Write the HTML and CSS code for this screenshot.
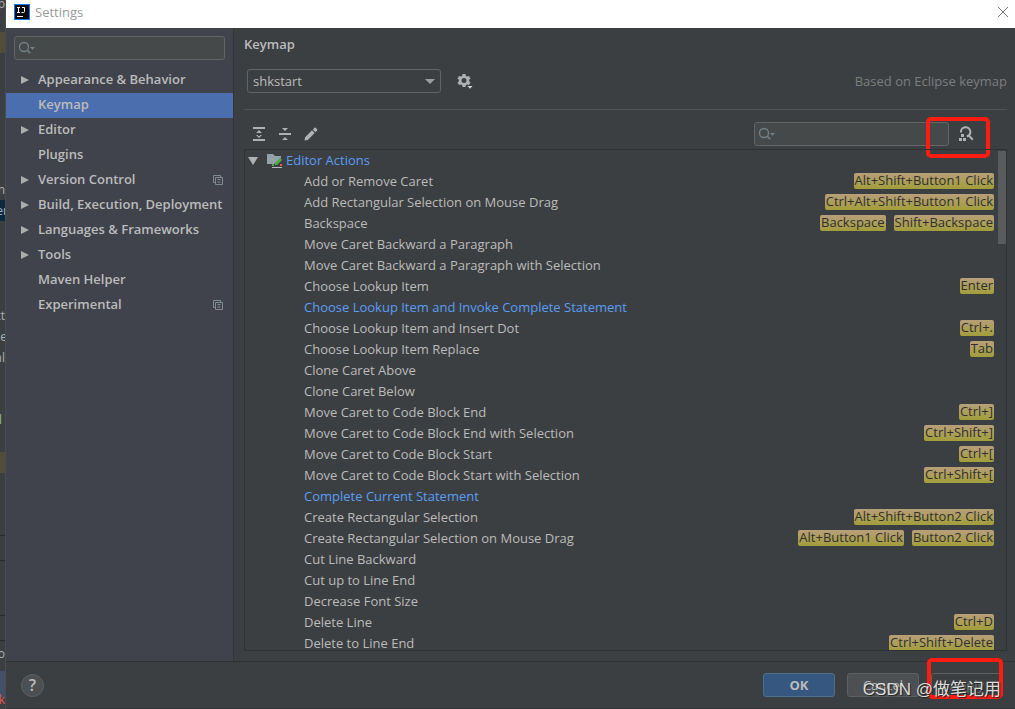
FILE: index.html
```html
<!DOCTYPE html>
<html lang="en">
<head>
<meta charset="utf-8">
<title>Settings</title>
<link rel="stylesheet" href="styles.css">
</head>
<body>
<div class="desktop">
  <div class="backdrop" aria-hidden="true">
    <span class="bg-band bg-band-a"></span>
    <span class="bg-band bg-band-b"></span>
    <span class="bg-band bg-band-c"></span>
    <span class="bg-band bg-band-d"></span>
    <span class="bg-text bg-t0">p</span>
    <span class="bg-text bg-t1">n</span>
    <span class="bg-text bg-t2">er</span>
    <span class="bg-text bg-t3">tt</span>
    <span class="bg-text bg-t4">ie</span>
    <span class="bg-text bg-t5">nl</span>
    <span class="bg-text bg-t6">l</span>
    <span class="bg-text bg-t7">o</span>
    <span class="bg-text bg-t8">k</span>
    <span class="bg-line bg-l1"></span>
    <span class="bg-line bg-l2"></span>
    <span class="bg-line bg-l3"></span>
    <span class="bg-line bg-l4"></span>
  </div>

  <div class="dialog">
    <header class="titlebar">
      <svg class="logo" width="16" height="16" viewBox="0 0 16 16"><rect width="16" height="16" fill="#087cfa"/><rect x="1" y="1" width="14" height="14" fill="#0b0b0d"/><path d="M3 3.500h3M4.500 3.500v5M3 8.500h3M8 3.500h2.500v4q0 1-1 1H7.500" fill="none" stroke="#fff"/><path d="M3 12.500h6" stroke="#fff"/></svg>
      <span class="title">Settings</span>
      <button class="close" aria-label="Close"><svg width="12" height="12" viewBox="0 0 12 12"><path d="M1 1l10 10M11 1L1 11" stroke="#777" fill="none"/></svg></button>
    </header>

    <div class="main">
      <nav class="sidebar">
        <label class="search">
          <svg width="18" height="16" viewBox="0 0 18 16"><circle cx="5" cy="7" r="4.500" fill="none" stroke="#758188" stroke-width="1.300"/><path d="M8.300 10.300l3 3" stroke="#758188" stroke-width="1.600"/><path d="M11 7h5l-2.500 2.800z" fill="#758188"/></svg>
          <input type="text" aria-label="Search settings">
        </label>
        <ul class="nav">
          <li><a href="#" class="parent">Appearance &amp; Behavior</a></li>
          <li><a href="#" class="selected">Keymap</a></li>
          <li><a href="#" class="parent">Editor</a></li>
          <li><a href="#">Plugins</a></li>
          <li><a href="#" class="parent">Version Control<svg class="copy" width="10" height="10" viewBox="0 0 10 10"><path d="M2.500 7.500h-2v-7h7v2M2.500 2.500h7v7h-7zM4.500 4.500h3M4.500 7h3" fill="none" stroke="#7f8b94"/></svg></a></li>
          <li><a href="#" class="parent">Build, Execution, Deployment</a></li>
          <li><a href="#" class="parent">Languages &amp; Frameworks</a></li>
          <li><a href="#" class="parent">Tools</a></li>
          <li><a href="#">Maven Helper</a></li>
          <li><a href="#">Experimental<svg class="copy" width="10" height="10" viewBox="0 0 10 10"><path d="M2.500 7.500h-2v-7h7v2M2.500 2.500h7v7h-7zM4.500 4.500h3M4.500 7h3" fill="none" stroke="#7f8b94"/></svg></a></li>
        </ul>
      </nav>

      <section class="content">
        <h1>Keymap</h1>
        <div class="scheme">
          <select aria-label="Keymap scheme"><option>shkstart</option></select>
          <button class="icon-btn" aria-label="Keymap scheme actions"><svg width="16" height="16" viewBox="0 0 16 16"><path fill="#afb1b3" fill-rule="evenodd" d="M5.500 1h3l.4 1.900 1.300.7 1.800-.6 1.500 2.500-1.400 1.300v1.400l1.400 1.300L12 12l-1.800-.6-1.300.7-.4 1.900h-3l-.4-1.900-1.300-.7L2 12 .500 9.500l1.400-1.300V6.800L.500 5.500 2 3l1.800.6 1.300-.7zM7 5a2.500 2.500 0 100 5 2.500 2.500 0 000-5z"/><path d="M9.500 12h6.500v1l-3.200 3-3.300-3z" fill="#3c3f41"/><path d="M10.500 13h5L13 15.700z" fill="#d5d6d7"/></svg></button>
          <span class="based">Based on Eclipse keymap</span>
        </div>
        <div class="toolbar">
          <button class="icon-btn" aria-label="Expand all"><svg width="14" height="16" viewBox="0 0 14 16"><path d="M1 1h12v2H1zM1 13h12v2H1zM7 4l3 3H4zM7 12l3-3H4zM6 6h2v1H6zM6 9h2v1H6z" fill="#afb1b3"/></svg></button>
          <button class="icon-btn" aria-label="Collapse all"><svg width="14" height="16" viewBox="0 0 14 16"><path d="M1 7h12v2H1zM7 5l3-3H4zM7 11l3 3H4z" fill="#afb1b3"/></svg></button>
          <button class="icon-btn" aria-label="Edit shortcut"><svg width="14" height="16" viewBox="0 0 14 16"><path d="M.5 14.500l.6-3.300L8 4.300l2.700 2.700-6.900 6.900zM8.800 3.500L10.500 1.800q.6-.5 1.200 0l1.500 1.500q.5.600 0 1.200L11.500 6.200z" fill="#afb1b3"/></svg></button>
          <label class="search filter">
            <svg width="18" height="16" viewBox="0 0 18 16"><circle cx="5" cy="7" r="4.500" fill="none" stroke="#758188" stroke-width="1.300"/><path d="M8.300 10.300l3 3" stroke="#758188" stroke-width="1.600"/><path d="M11 7h5l-2.500 2.800z" fill="#758188"/></svg>
            <input type="text" aria-label="Filter actions">
          </label>
          <button class="icon-btn find" aria-label="Find actions by shortcut"><svg width="16" height="16" viewBox="0 0 16 16"><path d="M3 6.500A4.700 4.700 0 1 1 8.800 10.500M10.800 9.500l4 4.200" fill="none" stroke="#afb1b3" stroke-width="2"/><path d="M3 8h3v3H3zM1 12h3v3H1zM5 12h3v3H5z" fill="#afb1b3"/></svg><span class="mark mark-find"></span></button>
        </div>
        <div class="panel">
          <table class="actions">
            <tbody>
            <tr class="group"><th colspan="2" scope="colgroup"><span class="group-label"><svg width="10" height="8" viewBox="0 0 10 8"><path d="M0 0h10L5 8z" fill="#afb1b3"/></svg><svg class="folder" width="16" height="14" viewBox="0 0 16 14"><path d="M0 0h6l2 2h6v2l-7 6H0z" fill="#93a1aa"/><path d="M8 9l5-5 2 2-5 5H8z" fill="#4caf43"/><path d="M5 10h2v2H5z" fill="#4caf43"/><path d="M5 13h10v1H5z" fill="#b4babd"/><path d="M13 10h2v2h-2z" fill="#e05b4b"/></svg>Editor Actions</span></th></tr>
            <tr><td>Add or Remove Caret</td><td><kbd>Alt+Shift+Button1 Click</kbd></td></tr>
            <tr><td>Add Rectangular Selection on Mouse Drag</td><td><kbd>Ctrl+Alt+Shift+Button1 Click</kbd></td></tr>
            <tr><td>Backspace</td><td><kbd>Backspace</kbd><kbd>Shift+Backspace</kbd></td></tr>
            <tr><td>Move Caret Backward a Paragraph</td><td></td></tr>
            <tr><td>Move Caret Backward a Paragraph with Selection</td><td></td></tr>
            <tr><td>Choose Lookup Item</td><td><kbd>Enter</kbd></td></tr>
            <tr class="changed"><td>Choose Lookup Item and Invoke Complete Statement</td><td></td></tr>
            <tr><td>Choose Lookup Item and Insert Dot</td><td><kbd>Ctrl+.</kbd></td></tr>
            <tr><td>Choose Lookup Item Replace</td><td><kbd>Tab</kbd></td></tr>
            <tr><td>Clone Caret Above</td><td></td></tr>
            <tr><td>Clone Caret Below</td><td></td></tr>
            <tr><td>Move Caret to Code Block End</td><td><kbd>Ctrl+]</kbd></td></tr>
            <tr><td>Move Caret to Code Block End with Selection</td><td><kbd>Ctrl+Shift+]</kbd></td></tr>
            <tr><td>Move Caret to Code Block Start</td><td><kbd>Ctrl+[</kbd></td></tr>
            <tr><td>Move Caret to Code Block Start with Selection</td><td><kbd>Ctrl+Shift+[</kbd></td></tr>
            <tr class="changed"><td>Complete Current Statement</td><td></td></tr>
            <tr><td>Create Rectangular Selection</td><td><kbd>Alt+Shift+Button2 Click</kbd></td></tr>
            <tr><td>Create Rectangular Selection on Mouse Drag</td><td><kbd>Alt+Button1 Click</kbd><kbd>Button2 Click</kbd></td></tr>
            <tr><td>Cut Line Backward</td><td></td></tr>
            <tr><td>Cut up to Line End</td><td></td></tr>
            <tr><td>Decrease Font Size</td><td></td></tr>
            <tr><td>Delete Line</td><td><kbd>Ctrl+D</kbd></td></tr>
            <tr><td>Delete to Line End</td><td><kbd>Ctrl+Shift+Delete</kbd></td></tr>
            </tbody>
          </table>
          <span class="thumb"></span>
        </div>
      </section>
    </div>

    <footer class="footer">
      <button class="help" aria-label="Help">?</button>
      <button class="btn primary">OK</button>
      <button class="btn">Cancel</button>
      <button class="btn disabled" disabled>Apply</button>
      <span class="mark mark-apply"></span>
      <span class="watermark">CSDN @做笔记用</span>
    </footer>
  </div>
</div>
</body>
</html>
```

FILE: styles.css
```css
* { box-sizing: border-box; }
body {
  margin: 0;
  background: #3c3f41;
  color: #bbbbbb;
  font: 13px/21px "Open Sans", "Noto Sans CJK SC", sans-serif;
}
button, input, select { font: inherit; color: inherit; }
button { border: 0; padding: 0; background: none; }
svg { display: block; flex: none; }

.desktop { display: flex; height: 100vh; overflow: hidden; }

/* Sliver of the editor window behind the dialog */
.backdrop { position: relative; width: 6px; flex: none; overflow: hidden; border-right: 1px solid #4a4d4f; }
.bg-band { position: absolute; left: 0; width: 6px; height: 21px; background: #524c3d; }
.bg-band-a { top: 32px; }
.bg-band-b { top: 200px; background: #0d293e; }
.bg-band-c { top: 452px; }
.bg-band-d { top: 671px; height: 26px; background: #43506b; }
.bg-line { position: absolute; left: 0; width: 6px; height: 1px; background: #2b2b2b; }
.bg-l1 { top: 535px; }
.bg-l2 { top: 560px; }
.bg-l3 { top: 615px; }
.bg-l4 { top: 640px; }
.bg-text { position: absolute; right: 0; font-size: 12px; line-height: 20px; color: #a9b0b6; white-space: nowrap; }
.bg-t0 { top: -6px; }
.bg-t1 { top: 180px; }
.bg-t2 { top: 201px; right: -3px; }
.bg-t3 { top: 306px; }
.bg-t4 { top: 327px; right: -2px; }
.bg-t5 { top: 348px; }
.bg-t6 { top: 410px; right: 3px; color: #8fc08a; }
.bg-t7 { top: 644px; }
.bg-t8 { top: 690px; color: #e05555; }

.dialog { flex: 1; min-width: 0; display: flex; flex-direction: column; }
.titlebar { display: flex; align-items: center; gap: 5px; height: 28px; flex: none; padding: 0 6px 4px 8px; background: #fff; color: #999; }
.close { margin-left: auto; }

.main { flex: 1; min-height: 0; display: flex; }
.sidebar { width: 228px; flex: none; background: #40434c; border-right: 1px solid #333537; }
.search { display: flex; align-items: center; height: 24px; padding: 0 4px; border: 1px solid #646464; border-radius: 3px; background: #45494a; }
.search input { flex: 1; min-width: 0; border: 0; outline: 0; background: none; }
.sidebar .search { margin: 8px 8px; }
.nav { list-style: none; margin: 0; padding: 0; font-weight: 600; }
.nav a { display: flex; align-items: center; height: 25px; padding: 0 10px 2px 32px; color: #bbbbbb; text-decoration: none; white-space: nowrap; }
.nav a.selected { background: #4b6eaf; }
.nav a.parent { padding-left: 15px; }
.nav a.parent::before { content: ""; margin-right: 9px; border: solid transparent; border-width: 4px 0 4px 8px; border-left-color: #adadad; }
.copy { margin-left: auto; }

.content { flex: 1; min-width: 0; display: flex; flex-direction: column; padding: 6px 8px 10px 10px; }
h1 { margin: 0; font-size: 13px; font-weight: 600; line-height: 21px; }
.scheme { position: relative; display: flex; align-items: center; gap: 16px; margin-top: 14px; padding: 0 0 16px 3px; border-bottom: 1px solid #515456; }
.scheme select { width: 194px; height: 24px; padding: 0 5px; border: 1px solid #646464; border-radius: 3px; appearance: none; background: #3c3f41; line-height: 20px; }
.scheme::before { content: ""; position: absolute; left: 181px; top: 10px; border: solid transparent; border-width: 5px 5px 0; border-top-color: #9a9da0; pointer-events: none; }
.based { margin-left: auto; color: #7b7d7f; }
.toolbar { display: flex; align-items: center; gap: 12px; padding: 12px 33px 3px 8px; }
.filter { width: 195px; margin-left: auto; }
.find { position: relative; margin-left: -3px; }
.mark { position: absolute; border: 4px solid #fd1c10; border-radius: 5px; pointer-events: none; }
.mark-find { left: -32px; top: -9px; width: 64px; height: 41px; }

.panel { position: relative; flex: 1; min-height: 0; overflow: hidden; border: 1px solid #2f3233; padding-right: 12px; }
.actions { width: 100%; border-collapse: collapse; }
.actions th, .actions td { height: 21px; padding: 0; font-weight: normal; text-align: left; line-height: 21px; vertical-align: top; white-space: nowrap; }
.actions td:first-child { padding-left: 59px; }
.actions td:last-child { padding-top: 2px; text-align: right; line-height: 16px; }
.group-label { display: flex; align-items: center; padding-left: 3px; color: #589df6; }
.folder { margin: 0 3px 0 9px; }
.actions .changed { color: #589df6; }
kbd { display: inline-block; vertical-align: top; height: 16px; margin-left: 8px; padding: 0 1px; border-radius: 2px; background: linear-gradient(#b89f7a, #a29e3a); color: #303030; font: 13px/15px "Open Sans", "Noto Sans", sans-serif; }
.thumb { position: absolute; right: 0; top: 1px; width: 8px; height: 93px; background: #595b5d; }

.footer { position: relative; flex: none; display: flex; align-items: center; gap: 12px; height: 48px; padding: 0 12px 0 15px; border-top: 1px solid #2f3233; border-bottom: 1px solid #323537; }
.help { width: 23px; height: 23px; margin-right: auto; border: 1px solid #5e6060; border-radius: 50%; background: #4c5052; font-size: 16px; font-weight: 600; line-height: 20px; }
.btn { width: 72px; height: 24px; border: 1px solid #5e6060; border-radius: 3px; background: #4c5052; line-height: 20px; }
.btn.primary { border-color: #4c708c; background: #365880; font-weight: bold; }
.btn.disabled { background: #3c3f41; color: #777; }
.mark-apply { right: 12px; top: -4px; width: 76px; height: 41px; }
.watermark { position: absolute; right: 14px; top: 16px; color: #dcdcdc; font: 17px/24px "Liberation Sans", "Noto Sans CJK SC", sans-serif; text-shadow: 1px 1px 1px #222; white-space: nowrap; }
```
